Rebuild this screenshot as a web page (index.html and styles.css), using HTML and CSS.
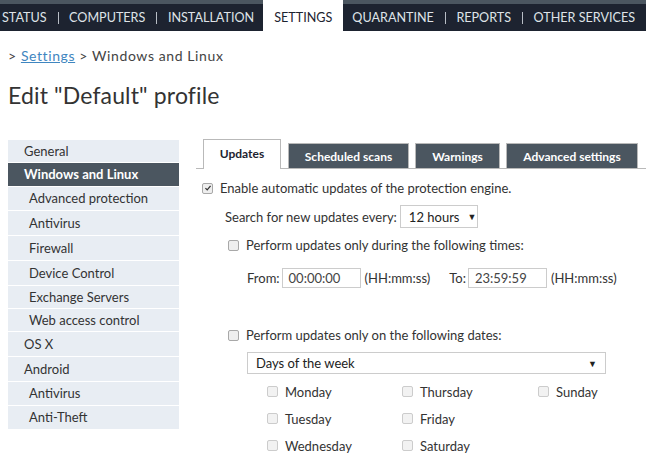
FILE: index.html
```html
<!DOCTYPE html>
<html>
<head>
<meta charset="utf-8">
<link rel="stylesheet" href="styles.css">
</head>
<body>
<div class="topstrip"></div>
<nav class="nav">
  <a class="nav-item">STATUS</a><span class="sep"></span>
  <a class="nav-item">COMPUTERS</a><span class="sep"></span>
  <a class="nav-item">INSTALLATION</a>
  <a class="nav-item active">SETTINGS</a>
  <a class="nav-item">QUARANTINE</a><span class="sep"></span>
  <a class="nav-item">REPORTS</a><span class="sep"></span>
  <a class="nav-item">OTHER SERVICES</a>
</nav>
<div class="breadcrumb">&gt; <a class="crumb-link">Settings</a> &gt; Windows and Linux</div>
<h1 class="title">Edit "Default" profile</h1>
<div class="main">
  <ul class="side">
    <li class="side-item h23">General</li>
    <li class="side-item selected h24">Windows and Linux</li>
    <li class="side-item sub h24">Advanced protection</li>
    <li class="side-item sub">Antivirus</li>
    <li class="side-item sub">Firewall</li>
    <li class="side-item sub">Device Control</li>
    <li class="side-item sub h23">Exchange Servers</li>
    <li class="side-item sub h23">Web access control</li>
    <li class="side-item">OS X</li>
    <li class="side-item">Android</li>
    <li class="side-item sub h24">Antivirus</li>
    <li class="side-item sub h24">Anti-Theft</li>
  </ul>
  <div class="content">
    <div class="tabs">
      <div class="tab active">Updates</div>
      <div class="tab t2">Scheduled scans</div>
      <div class="tab t3">Warnings</div>
      <div class="tab t4">Advanced settings</div>
    </div>
    <div class="row r-enable"><span class="cb checked"><svg viewBox="0 0 10 10" width="8" height="8"><path d="M1.8 5.2 L4 7.3 L8.2 2.4" fill="none" stroke="#333" stroke-width="1.6"/></svg></span><span>Enable automatic updates of the protection engine.</span></div>
    <div class="row r-search"><span>Search for new updates every:</span><span class="select small">12 hours <span class="arrow">&#9660;</span></span></div>
    <div class="row r-times"><span class="cb"></span><span>Perform updates only during the following times:</span></div>
    <div class="row r-from">
      <span>From:</span><span class="input">00:00:00</span><span class="fmt">(HH:mm:ss)</span>
      <span class="to">To:</span><span class="input">23:59:59</span><span class="fmt">(HH:mm:ss)</span>
    </div>
    <div class="row r-dates"><span class="cb"></span><span>Perform updates only on the following dates:</span></div>
    <div class="select wide">Days of the week <span class="arrow">&#9660;</span></div>
    <div class="days">
      <div class="day"><span class="cb light"></span>Monday</div>
      <div class="day"><span class="cb light"></span>Thursday</div>
      <div class="day"><span class="cb light"></span>Sunday</div>
      <div class="day"><span class="cb light"></span>Tuesday</div>
      <div class="day"><span class="cb light"></span>Friday</div>
      <div class="day"></div>
      <div class="day"><span class="cb light"></span>Wednesday</div>
      <div class="day"><span class="cb light"></span>Saturday</div>
    </div>
  </div>
</div>
</body>
</html>
```
FILE: styles.css
```css
* { box-sizing: border-box; }
html, body { margin: 0; padding: 0; background: #fff; }
body {
  font-family: Lato, "Open Sans", sans-serif;
  font-size: 13px;
  color: #333;
  width: 646px;
  height: 463px;
  overflow: hidden;
}
.topstrip { height: 4px; background: #4b5660; }
.nav {
  height: 27px;
  background: #1d2330;
  display: flex;
  align-items: center;
  white-space: nowrap;
}
.nav-item {
  color: #dfe3e8;
  font-size: 12.6px;
  height: 27px;
  line-height: 27px;
  padding: 0 11px;
}
.nav-item:first-child { padding-left: 2px; }
.nav-item.active {
  background: #fff;
  color: #1d2330;
  height: 31px;
  margin-top: -4px;
  line-height: 35px;
  padding: 0 11px;
  margin-left: -2px;
  margin-right: -2px;
}
.sep { width: 1px; height: 12px; background: #b8bec6; }
.breadcrumb { margin: 17px 0 0 8px; font-size: 14px; letter-spacing: 0.6px; line-height: 16px; color: #444; }
.crumb-link { color: #3f86c0; text-decoration: underline; }
.title {
  margin: 17px 0 0 8px;
  font-size: 23px;
  letter-spacing: 0.15px;
  font-weight: normal;
  line-height: 28px;
  color: #333;
}
.main { display: flex; margin-top: 31px; }
.side {
  list-style: none;
  margin: 0 0 0 8px;
  padding: 0;
  width: 171px;
}
.side-item {
  background: #e8edf3;
  height: 25px;
  line-height: 24px;
  border-bottom: 1px solid #fff;
  padding-left: 16px;
  font-size: 13px;
  color: #333;
}
.side-item.h23 { height: 23px; line-height: 22px; }
.side-item.h24 { height: 24px; line-height: 23px; }
.side-item.sub { padding-left: 21px; }
.side-item.selected { background: #4b5660; color: #fff; font-weight: bold; }
.content { flex: 1; margin-left: 17px; position: relative; }
.tabs {
  display: flex;
  align-items: flex-end;
  height: 29px;
  border-bottom: 1px solid #b9b9b9;
  padding-left: 7px;
}
.tab {
  height: 25px;
  line-height: 25px;
  background: #4b5660;
  color: #fff;
  font-weight: bold;
  font-size: 12px;
  text-align: center;
  margin-right: 6px;
  border: 1px solid #b9b9b9;
  border-bottom: none;
}
.tab.active {
  width: 78px;
  background: #fff;
  color: #1d2330;
  margin-right: 7px;
  margin-bottom: -1px;
  height: 30px;
  line-height: 28px;
}
.t2 { width: 121px; }
.t3 { width: 85px; margin-right: 6px; }
.t4 { width: 132px; }
.row { display: flex; align-items: center; font-size: 13px; white-space: nowrap; }
.cb {
  width: 11px; height: 11px;
  border: 1px solid #a8a8a8;
  border-radius: 2px;
  background: #eee;
  display: inline-flex;
  align-items: center;
  justify-content: center;
  flex: none;
}
.cb.light { border-color: #ccc; background: #f2f2f2; }
.r-enable { margin: 11px 0 0 6px; }
.r-enable .cb { margin-right: 7px; }
.r-search { margin: 9px 0 0 29px; }
.select {
  border: 1px solid #ccc;
  background: #fff;
  display: flex;
  align-items: center;
  color: #222;
}
.select.small { margin-left: 3px; height: 23px; width: 78px; padding-left: 8px; }
.select.small .arrow { margin-left: 8px; font-size: 9px; }
.r-times { margin: 9px 0 0 32px; }
.r-times .cb, .r-dates .cb { margin-right: 7px; }
.r-from { margin: 15px 0 0 51px; }
.input {
  border: 1px solid #ccc;
  height: 20px;
  width: 79px;
  line-height: 18px;
  padding-left: 6px;
  margin-left: 2px;
  color: #444;
}
.fmt { margin-left: 4px; }
.to { margin-left: 19px; }
.r-dates { margin: 39px 0 0 32px; }
.select.wide {
  margin: 9px 0 0 51px;
  width: 359px;
  height: 22px;
  padding: 0 8px;
  font-size: 13px;
  justify-content: space-between;
}
.select.wide .arrow { font-size: 9px; }
.days {
  display: grid;
  grid-template-columns: 135px 136px 100px;
  margin: 4px 0 0 71px;
  row-gap: 0;
}
.day { display: flex; align-items: center; height: 27px; font-size: 13px; }
.day .cb { margin-right: 7px; }
```
